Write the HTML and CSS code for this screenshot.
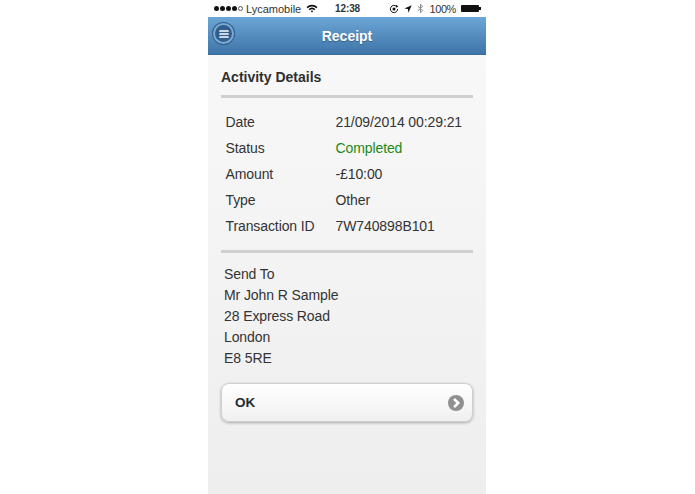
FILE: index.html
```html
<!DOCTYPE html>
<html>
<head>
	<title>Receipt</title>
<link rel="stylesheet" href="styles.css">
</head>
<body>
  <div class="phone">
    <div class="status-bar">
      <div class="status-left">
        <span class="signal"><i></i><i></i><i></i><i></i><i class="off"></i></span>
        <span>Lycamobile</span>
        <svg class="wifi" width="12" height="9" viewBox="0 0 12 9">
          <path d="M0.5 3 A8 8 0 0 1 11.5 3 L10.4 4.2 A6.4 6.4 0 0 0 1.6 4.2 Z" fill="#111"/>
          <path d="M2.6 5.1 A5 5 0 0 1 9.4 5.1 L8.3 6.2 A3.4 3.4 0 0 0 3.7 6.2 Z" fill="#111"/>
          <path d="M4.6 7 A2.2 2.2 0 0 1 7.4 7 L6 8.6 Z" fill="#111"/>
        </svg>
      </div>
      <div class="status-time">12:38</div>
      <div class="status-right">
        <svg width="10" height="10" viewBox="0 0 10 10">
          <path d="M8.6 5 A3.6 3.6 0 1 1 7.5 2.4" fill="none" stroke="#111" stroke-width="1"/>
          <path d="M7 0.8 L9.4 2.6 L6.8 3.8 Z" fill="#111"/>
          <circle cx="5" cy="5" r="1.5" fill="#111"/>
        </svg>
        <svg class="arrow" width="8" height="8" viewBox="0 0 9 9">
          <path d="M8.6 0.4 L0.4 4 L4.4 4.6 L5 8.6 Z" fill="#111"/>
        </svg>
        <svg class="bluetooth" width="7" height="11" viewBox="0 0 6 10">
          <path d="M0.5 2.8 L5 6.9 L3 9 L3 1 L5 3.1 L0.5 7.2" fill="none" stroke="#8a8a8a" stroke-width="0.9"/>
        </svg>
        <span class="percent">100%</span>
        <span class="battery"><span class="battery-tip"></span></span>
      </div>
    </div>

    <div class="header">
      <div class="menu-btn">
        <svg width="10" height="10" viewBox="0 0 10 10">
          <path d="M1 2 H9 M1 5 H9 M1 8 H9" stroke="#fff" stroke-width="1.7" stroke-linecap="round"/>
        </svg>
      </div>
      <h1 class="header-title">Receipt</h1>
    </div>

    <div class="content">
      <h2 class="section-title">Activity Details</h2>
      <hr class="divider">
      <div class="details">
        <div class="detail-row"><span class="detail-label">Date</span><span>21/09/2014 00:29:21</span></div>
        <div class="detail-row"><span class="detail-label">Status</span><span class="completed">Completed</span></div>
        <div class="detail-row"><span class="detail-label">Amount</span><span>-£10:00</span></div>
        <div class="detail-row"><span class="detail-label">Type</span><span>Other</span></div>
        <div class="detail-row"><span class="detail-label">Transaction ID</span><span>7W740898B101</span></div>
      </div>
      <hr class="divider">
      <div class="address">
        <div>Send To</div>
        <div>Mr John R Sample</div>
        <div>28 Express Road</div>
        <div>London</div>
        <div>E8 5RE</div>
      </div>
      <div class="ok-btn">
        <span>OK</span>
        <span class="ok-icon">
          <svg width="12" height="12" viewBox="0 0 10 10">
            <path d="M3.4 1.6 L6.8 5 L3.4 8.4" fill="none" stroke="#fff" stroke-width="2.2"/>
          </svg>
        </span>
      </div>
    </div>
  </div>
</body>
</html>
```

FILE: styles.css
```css
body {
    margin: 0;
    background: #fff;
    font-family: 'Liberation Sans', Arial, sans-serif;
}

.phone {
    width: 278px;
    height: 494px;
    margin-left: 208px;
    display: flex;
    flex-direction: column;
    overflow: hidden;
}

/* status bar */
.status-bar {
    height: 17px;
    flex: none;
    background: #fff;
    display: flex;
    align-items: center;
    justify-content: space-between;
    position: relative;
    padding: 0 5px 0 6px;
    font-size: 11px;
    color: #333;
}

.status-left,
.status-right {
    display: flex;
    align-items: center;
    gap: 3px;
}

.status-right {
    gap: 5px;
}

.signal {
    display: flex;
    gap: 1px;
}

.signal i {
    width: 5px;
    height: 5px;
    border-radius: 50%;
    background: #111;
}

.signal i.off {
    box-sizing: border-box;
    background: none;
    border: 1px solid #555;
}

.wifi {
    margin-left: 2px;
}

.status-time {
    position: absolute;
    left: 127px;
    top: 3px;
    font-weight: bold;
    font-size: 10px;
    letter-spacing: -0.1px;
}

.percent {
    letter-spacing: -0.4px;
}

.battery {
    display: block;
    position: relative;
    width: 18px;
    height: 7px;
    background: #111;
    border-radius: 1px;
    margin-right: 2px;
}

.battery-tip {
    position: absolute;
    right: -2px;
    top: 2px;
    width: 2px;
    height: 3px;
    background: #111;
}

/* header */
.header {
    height: 38px;
    flex: none;
    box-sizing: border-box;
    display: flex;
    align-items: center;
    justify-content: center;
    position: relative;
    background: linear-gradient(#6ba6d6, #3f74a8);
    border-bottom: 1px solid #3a6a98;
}

.header-title {
    margin: 0;
    color: #fff;
    font-size: 14px;
    font-weight: bold;
    text-shadow: 0 1px 1px rgba(0, 0, 0, 0.3);
}

.menu-btn {
    position: absolute;
    left: 5px;
    top: 6px;
    width: 21px;
    height: 21px;
    box-sizing: border-box;
    border-radius: 50%;
    background: #2f5f8f;
    border: 2px solid #7fa9cf;
    box-shadow: 0 0 0 1px #2f5f8f;
    display: flex;
    align-items: center;
    justify-content: center;
}

/* content */
.content {
    flex: 1;
    padding: 14px 13px 0;
    background: linear-gradient(#f8f8f8, #eeeeee);
    color: #333;
    font-size: 14px;
}

.section-title {
    margin: 0 0 10px;
    font-size: 14px;
    line-height: 16px;
    font-weight: bold;
    color: #2f2f2f;
}

.divider {
    height: 3px;
    margin: 0;
    border: 0;
    background: #cfcfcf;
}

.details {
    padding: 11px 0 11px 4.5px;
    letter-spacing: -0.1px;
}

.detail-row {
    display: flex;
    height: 26px;
    line-height: 26px;
}

.detail-label {
    width: 110px;
}

.completed {
    color: #1a8a1a;
}

.address {
    padding: 11px 0 0 3px;
    line-height: 21px;
    letter-spacing: -0.1px;
}

.ok-btn {
    margin-top: 14px;
    height: 39px;
    box-sizing: border-box;
    display: flex;
    align-items: center;
    justify-content: space-between;
    padding: 0 8px 0 13px;
    border: 1px solid #cfcfcf;
    border-radius: 8px;
    background: linear-gradient(#ffffff, #f0f0f0);
    box-shadow: 0 1px 3px rgba(0, 0, 0, 0.3);
    font-size: 13.5px;
    font-weight: bold;
    color: #222b33;
}

.ok-icon {
    width: 16px;
    height: 16px;
    border-radius: 50%;
    background: #8f8f8f;
    display: flex;
    align-items: center;
    justify-content: center;
}
```
